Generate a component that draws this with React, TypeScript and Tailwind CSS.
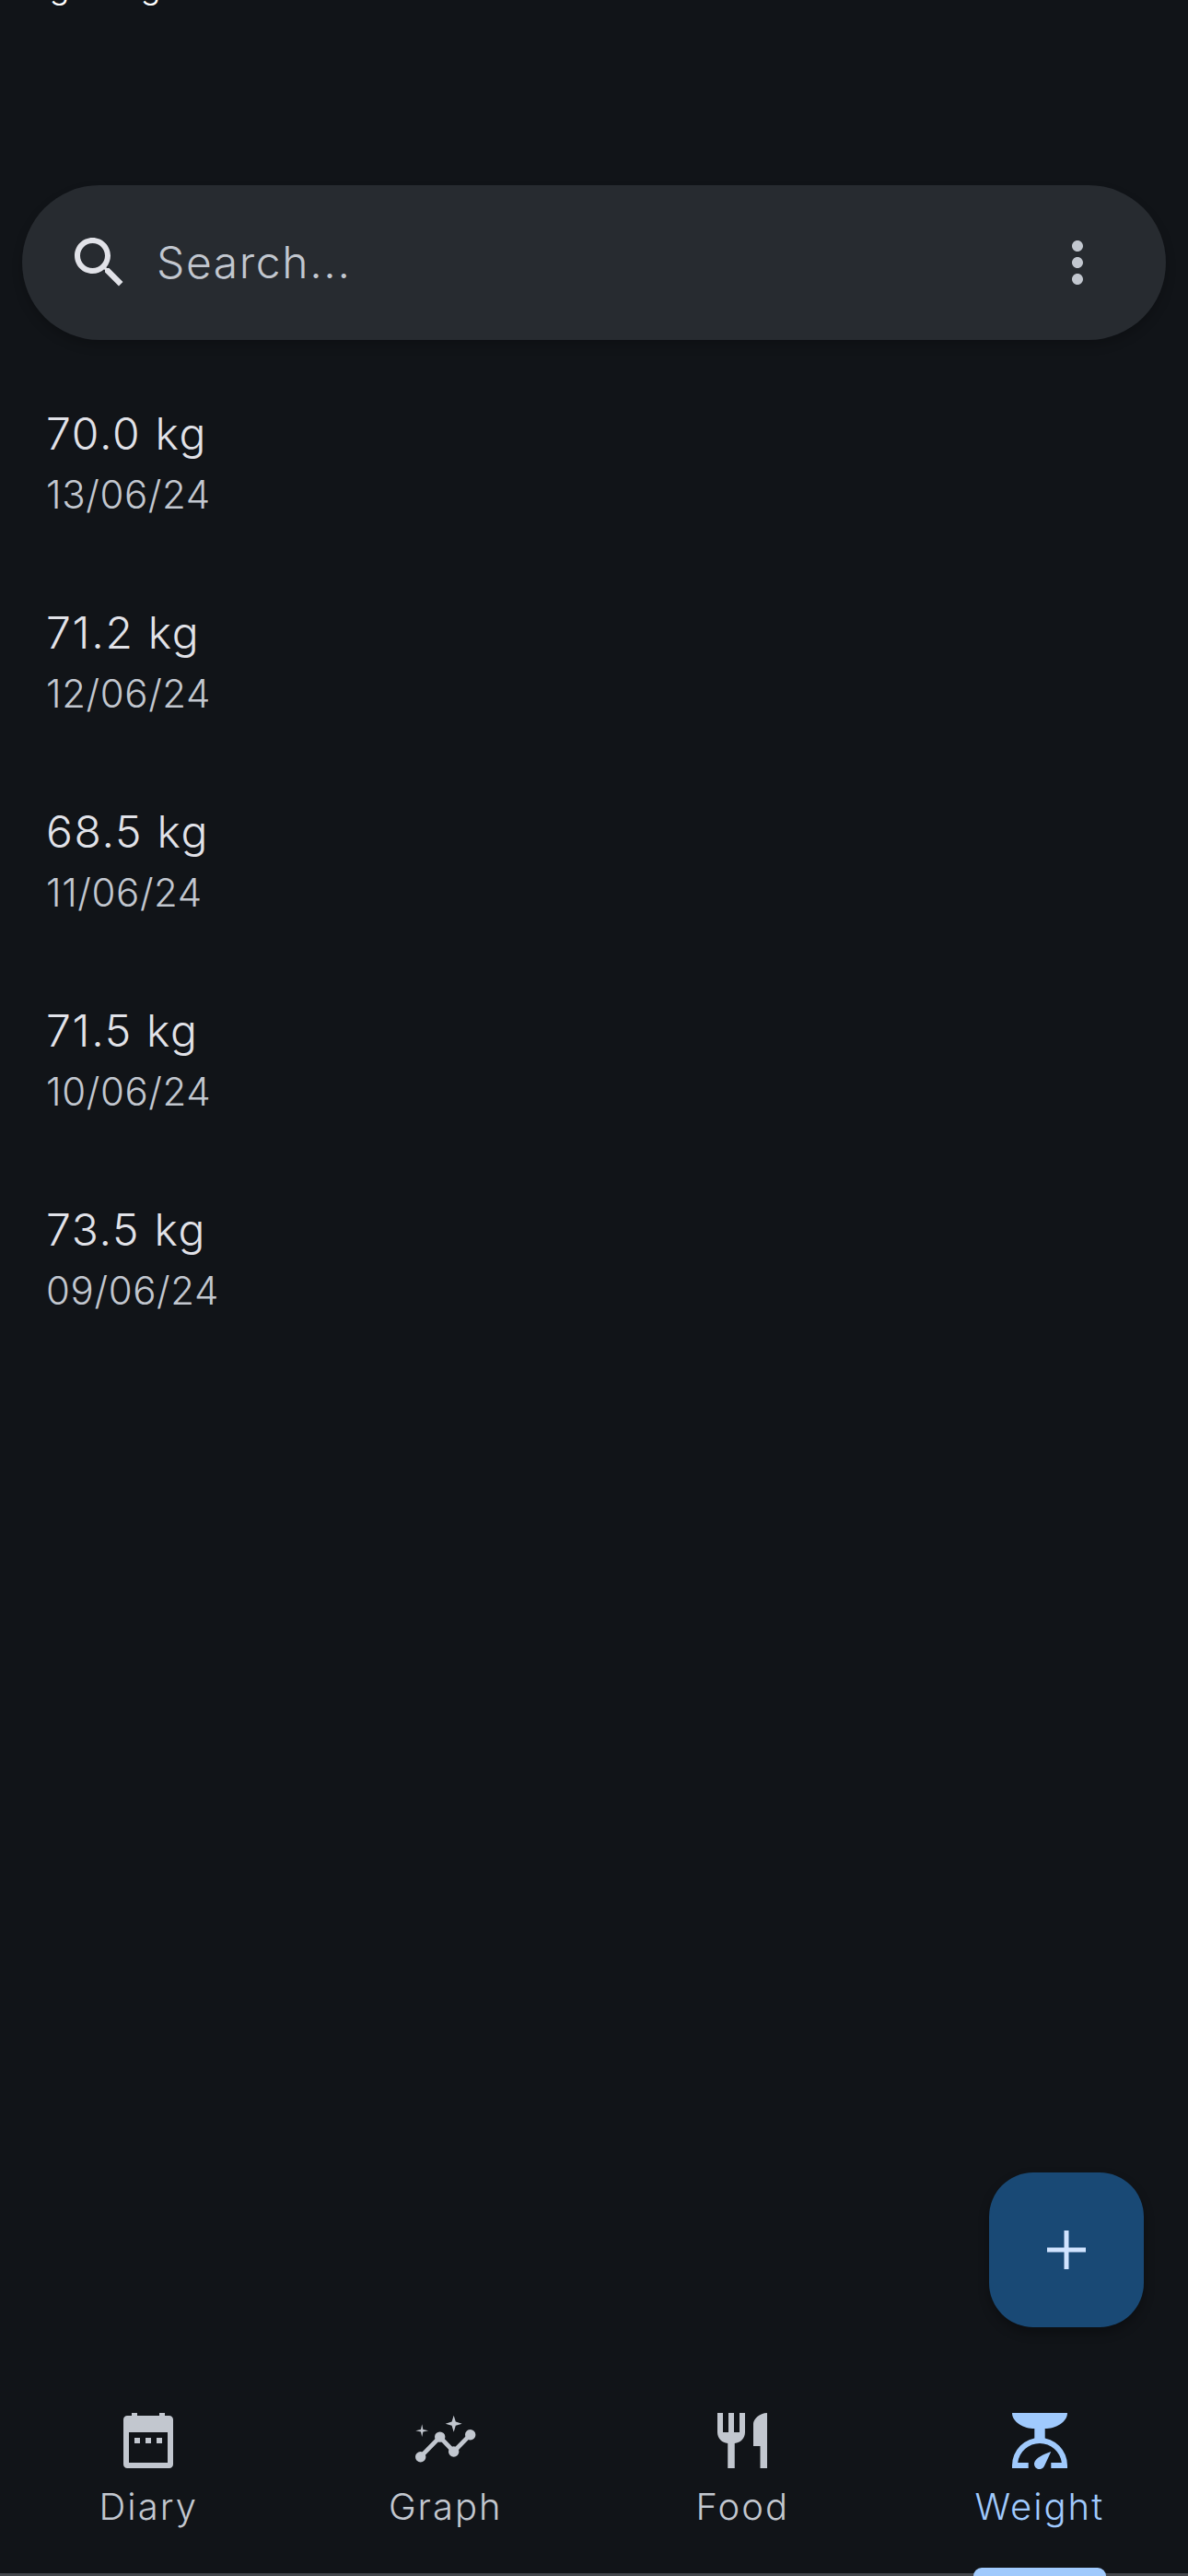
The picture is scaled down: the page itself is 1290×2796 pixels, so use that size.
const entries = [
  { weight: "70.0 kg", date: "13/06/24" },
  { weight: "71.2 kg", date: "12/06/24" },
  { weight: "68.5 kg", date: "11/06/24" },
  { weight: "71.5 kg", date: "10/06/24" },
  { weight: "73.5 kg", date: "09/06/24" },
];

function DiaryIcon() {
  return (
    <svg viewBox="0 0 24 24" className="h-[72px] w-[72px]" fill="currentColor">
      <path
        fillRule="evenodd"
        d="M6 2h2v1h8V2h2v1h1.6C20.4 3 21 3.6 21 4.4v16.2c0 .8-.6 1.4-1.4 1.4H4.4C3.6 22 3 21.4 3 20.6V4.4C3 3.6 3.6 3 4.4 3H6V2zM5 9v11h14V9H5zm2 2h2v2H7v-2zm4 0h2v2h-2v-2zm4 0h2v2h-2v-2z"
      />
    </svg>
  );
}

function GraphIcon() {
  return (
    <svg viewBox="0 0 24 24" className="h-[72px] w-[72px]" fill="currentColor">
      <path d="M2.9 17.9L9.9 10.7L14.9 16L20.9 9.9" fill="none" stroke="currentColor" strokeWidth="1.6" />
      <circle cx="2.9" cy="17.9" r="1.9" />
      <circle cx="9.9" cy="10.7" r="1.9" />
      <circle cx="14.9" cy="16" r="1.9" />
      <circle cx="20.9" cy="9.9" r="1.9" />
      <path d="M14.9 2.9L15.6 5.2L17.9 5.9L15.6 6.6L14.9 8.9L14.2 6.6L11.9 5.9L14.2 5.2Z" />
      <path d="M3.4 6.1L3.8 8L5.7 8.4L3.8 8.8L3.4 10.7L3 8.8L1.1 8.4L3 8Z" />
    </svg>
  );
}

function FoodIcon() {
  return (
    <svg viewBox="0 0 24 24" className="h-[72px] w-[72px]" fill="currentColor">
      <path d="M11 9H9V2H7v7H5V2H3v7c0 2.12 1.66 3.84 3.75 3.97V22h2.5v-9.03C11.34 12.84 13 11.12 13 9V2h-2v7zm5-3v8h2.5v8H21V2c-2.76 0-5 2.24-5 4z" />
    </svg>
  );
}

function WeightIcon() {
  return (
    <svg viewBox="0 0 24 24" className="h-[72px] w-[72px]" fill="currentColor">
      <path d="M2 2H22C22 5.5 17.5 7.7 13.9 7.7V11.5H10.1V7.7C6.5 7.7 2 5.5 2 2Z" />
      <path d="M2 22V21A10 10 0 0 1 22 21V22H16.1V20H19.94A8 8 0 0 0 4.06 20H7.9V22Z" />
      <path d="M16.1 16L13.6 21.3A1.9 1.9 0 0 1 10.2 19.6C10.8 18.4 13 17 16.1 16Z" />
    </svg>
  );
}

const tabs = [
  { label: "Diary", icon: <DiaryIcon /> },
  { label: "Graph", icon: <GraphIcon /> },
  { label: "Food", icon: <FoodIcon /> },
  { label: "Weight", icon: <WeightIcon />, active: true },
];

export default function App() {
  return (
    <div className="relative flex h-[2796px] w-[1290px] flex-col overflow-hidden bg-[#111418] font-['Inter',sans-serif] text-[#e1e2e8]">
      {/* top of the previous screen, cut off by the screenshot */}
      <div className="h-[201px] shrink-0 overflow-hidden">
        <p className="-mt-[40px] pl-[10px] text-[36px] font-light leading-[50px] tracking-[1px] text-white">Log Weight</p>
      </div>

      <div className="mx-[24px] flex h-[168px] shrink-0 items-center rounded-full bg-[#272b30] pl-[48px] pr-[60px] shadow-[0_6px_12px_rgba(0,0,0,0.2)]">
        <svg viewBox="0 0 24 24" className="h-[72px] w-[72px] shrink-0" fill="currentColor">
          <path d="M15.5 14h-.79l-.28-.27C15.41 12.59 16 11.11 16 9.5 16 5.91 13.09 3 9.5 3S3 5.91 3 9.5 5.91 16 9.5 16c1.61 0 3.09-.59 4.23-1.57l.27.28v.79l5 4.99L20.49 19l-4.99-5zm-6 0C7.01 14 5 11.99 5 9.5S7.01 5 9.5 5 14 7.01 14 9.5 11.99 14 9.5 14z" />
        </svg>
        <span className="ml-[26px] flex-1 text-[48px] font-[350] leading-[72px] tracking-[1.6px] text-[#c2c7cf]">Search...</span>
        <svg viewBox="0 0 24 24" className="h-[72px] w-[72px] shrink-0 text-[#c2c7cf]" fill="currentColor">
          <path d="M12 8c1.1 0 2-.9 2-2s-.9-2-2-2-2 .9-2 2 .9 2 2 2zm0 2c-1.1 0-2 .9-2 2s.9 2 2 2 2-.9 2-2-.9-2-2-2zm0 6c-1.1 0-2 .9-2 2s.9 2 2 2 2-.9 2-2-.9-2-2-2z" />
        </svg>
      </div>

      <ul className="mt-[24px] flex-1">
        {entries.map((entry) => (
          <li key={entry.date} className="flex h-[216px] flex-col justify-center pl-[50px] pr-[48px]">
            <span className="text-[48px] font-[350] leading-[72px] tracking-[1.7px]">{entry.weight}</span>
            <span className="text-[42px] font-[350] leading-[60px] tracking-[0.6px] text-[#c2c7cf]">{entry.date}</span>
          </li>
        ))}
      </ul>

      <button className="absolute bottom-[270px] right-[48px] flex h-[168px] w-[168px] items-center justify-center rounded-[48px] bg-[#194975] text-[#d1e4ff] shadow-[0_6px_12px_rgba(0,0,0,0.3)]">
        <svg viewBox="0 0 42 42" className="h-[42px] w-[42px]" fill="currentColor">
          <path d="M18.5 0h5v18.5H42v5H23.5V42h-5V23.5H0v-5h18.5z" />
        </svg>
      </button>

      <nav className="flex h-[240px] shrink-0 border-b-[3px] border-[#44474c]">
        {tabs.map((tab) => (
          <div
            key={tab.label}
            className={`relative flex flex-1 flex-col items-center pt-[57px] ${tab.active ? "text-[#a0cafd]" : "text-[#c2c7cf]"}`}
          >
            {tab.icon}
            <span className="mt-[8px] text-[40px] font-[350] leading-[56px] tracking-[2px]">{tab.label}</span>
            {tab.active && (
              <span className="absolute -bottom-[3px] left-1/2 h-[9px] w-[144px] -translate-x-1/2 rounded-t-[9px] bg-[#a0cafd]" />
            )}
          </div>
        ))}
      </nav>
    </div>
  );
}
